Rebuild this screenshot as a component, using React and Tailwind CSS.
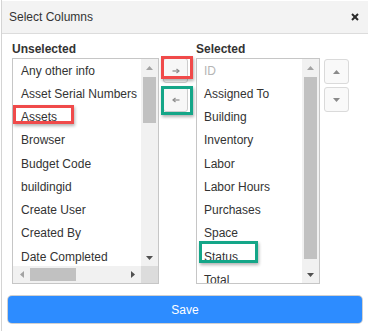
import React from "react";

const left = [
  "Any other info",
  "Asset Serial Numbers",
  "Assets",
  "Browser",
  "Budget Code",
  "buildingid",
  "Create User",
  "Created By",
  "Date Completed",
];

const right = [
  "ID",
  "Assigned To",
  "Building",
  "Inventory",
  "Labor",
  "Labor Hours",
  "Purchases",
  "Space",
  "Status",
  "Total",
];

function Tri({ dir, color }) {
  const pts = {
    up: "0,4 7,4 3.5,0",
    down: "0,0 7,0 3.5,4",
    left: "4,0 4,7 0,3.5",
    right: "0,0 0,7 4,3.5",
  }[dir];
  const vert = dir === "up" || dir === "down";
  return (
    <svg width={vert ? 7 : 4} height={vert ? 4 : 7} viewBox={vert ? "0 0 7 4" : "0 0 4 7"}>
      <polygon points={pts} fill={color} />
    </svg>
  );
}

function Arrow({ dir }) {
  return (
    <svg width="8" height="6" viewBox="0 0 8 6">
      {dir === "right" ? (
        <>
          <line x1="0.5" y1="3" x2="6.5" y2="3" stroke="#8a8a8a" strokeWidth="1.2" />
          <polyline points="4.5,1 7,3 4.5,5" fill="none" stroke="#8a8a8a" strokeWidth="1.2" />
        </>
      ) : (
        <>
          <line x1="1.5" y1="3" x2="7.5" y2="3" stroke="#8a8a8a" strokeWidth="1.2" />
          <polyline points="3.5,1 1,3 3.5,5" fill="none" stroke="#8a8a8a" strokeWidth="1.2" />
        </>
      )}
    </svg>
  );
}

export default function App() {
  return (
    <div className="relative w-[370px] h-[331px] bg-white overflow-hidden font-['Liberation_Sans',Arial,sans-serif] text-[#333]">
      <div className="ml-[1px] w-[367px] h-full border-l border-[#d4d4d4] flex flex-col">
        {/* header */}
        <div className="mt-[1px] h-[33px] bg-[#f3f3f3] border-b border-[#dcdcdc] flex items-center justify-between pl-[7px] pr-[9px]">
          <span className="text-[12px] leading-[14px]">Select Columns</span>
          <svg width="8" height="8" viewBox="0 0 8 8">
            <line x1="1" y1="1" x2="7" y2="7" stroke="#2a2a2a" strokeWidth="2" />
            <line x1="7" y1="1" x2="1" y2="7" stroke="#2a2a2a" strokeWidth="2" />
          </svg>
        </div>

        {/* body */}
        <div className="flex items-start pl-[10px] pt-[8px]">
          {/* unselected column */}
          <div className="flex flex-col w-[147px]">
            <div className="text-[12px] leading-[14px] font-bold mb-[2px]">Unselected</div>
            <div className="h-[226px] border border-[#c6c6c6] flex flex-col">
              <div className="flex flex-1 min-h-0">
                <div className="flex-1 overflow-hidden pl-[8px] text-[12px] whitespace-nowrap">
                  {left.map((t) => (
                    <div key={t} className="h-[23.25px] flex items-center">
                      {t}
                    </div>
                  ))}
                </div>
                <div className="w-[17px] bg-[#f1f1f1] flex flex-col items-center">
                  <div className="h-[17px] flex items-center justify-center">
                    <Tri dir="up" color="#a3a3a3" />
                  </div>
                  <div className="w-[13px] h-[46px] bg-[#c1c1c1] mt-[1px]" />
                  <div className="flex-1" />
                  <div className="h-[17px] flex items-center justify-center">
                    <Tri dir="down" color="#505050" />
                  </div>
                </div>
              </div>
              <div className="h-[17px] flex">
                <div className="flex-1 bg-[#f1f1f1] flex items-center">
                  <div className="w-[17px] flex items-center justify-center">
                    <Tri dir="left" color="#a3a3a3" />
                  </div>
                  <div className="w-[46px] h-[13px] bg-[#c1c1c1]" />
                  <div className="flex-1" />
                  <div className="w-[17px] flex items-center justify-center">
                    <Tri dir="right" color="#505050" />
                  </div>
                </div>
                <div className="w-[17px] bg-[#dcdcdc]" />
              </div>
            </div>
          </div>

          {/* move buttons */}
          <div className="ml-[4px] mt-[16px] flex flex-col gap-[4px]">
            <div className="w-[25px] h-[25px] bg-[#f7f7f7] border border-[#cdcdcd] rounded-[3px] flex items-center justify-center">
              <Arrow dir="right" />
            </div>
            <div className="w-[25px] h-[25px] bg-[#f7f7f7] border border-[#cdcdcd] rounded-[3px] flex items-center justify-center">
              <Arrow dir="left" />
            </div>
          </div>

          {/* selected column */}
          <div className="ml-[8px] flex flex-col w-[124px]">
            <div className="text-[12px] leading-[14px] font-bold mb-[2px]">Selected</div>
            <div className="h-[226px] border border-[#c6c6c6] flex">
              <div className="flex-1 overflow-hidden pl-[7px] text-[12px] whitespace-nowrap">
                {right.map((t) => (
                  <div
                    key={t}
                    className={"h-[23.25px] flex items-center " + (t === "ID" ? "text-[#b5b5b5]" : "")}
                  >
                    {t}
                  </div>
                ))}
              </div>
              <div className="w-[17px] bg-[#f1f1f1] flex flex-col items-center">
                <div className="h-[17px] flex items-center justify-center">
                  <Tri dir="up" color="#a3a3a3" />
                </div>
                <div className="w-[13px] h-[182px] bg-[#c1c1c1] mt-[1px]" />
                <div className="flex-1" />
                <div className="h-[17px] flex items-center justify-center">
                  <Tri dir="down" color="#505050" />
                </div>
              </div>
            </div>
          </div>

          {/* order buttons */}
          <div className="ml-[4px] mt-[17px] flex flex-col gap-[3px]">
            <div className="w-[25px] h-[25px] bg-[#f9f9f9] border border-[#dadada] rounded-[3px] flex items-center justify-center">
              <Tri dir="up" color="#8a8a8a" />
            </div>
            <div className="w-[25px] h-[25px] bg-[#f9f9f9] border border-[#dadada] rounded-[3px] flex items-center justify-center">
              <Tri dir="down" color="#8a8a8a" />
            </div>
          </div>
        </div>

        {/* save */}
        <div className="ml-[6px] mt-[12px] w-[354px] h-[27px] rounded-[4px] bg-[#2d8cff] ring-1 ring-[#d0d0d0] flex items-center justify-center text-white text-[12px]">
          Save
        </div>
      </div>

      {/* annotations */}
      <div className="absolute left-[13px] top-[105px] w-[61px] h-[19px] border-[3px] border-[#f04a4a] shadow-[1px_2px_3px_rgba(0,0,0,0.3)]" />
      <div className="absolute left-[161px] top-[56px] w-[32px] h-[23px] border-[3px] border-[#f04a4a] shadow-[1px_2px_3px_rgba(0,0,0,0.3)]" />
      <div className="absolute left-[161px] top-[86px] w-[32px] h-[29px] border-[3px] border-[#14a688] shadow-[1px_2px_3px_rgba(0,0,0,0.3)]" />
      <div className="absolute left-[199px] top-[241px] w-[59px] h-[22px] border-[3px] border-[#14a688] shadow-[1px_2px_3px_rgba(0,0,0,0.3)]" />
    </div>
  );
}
